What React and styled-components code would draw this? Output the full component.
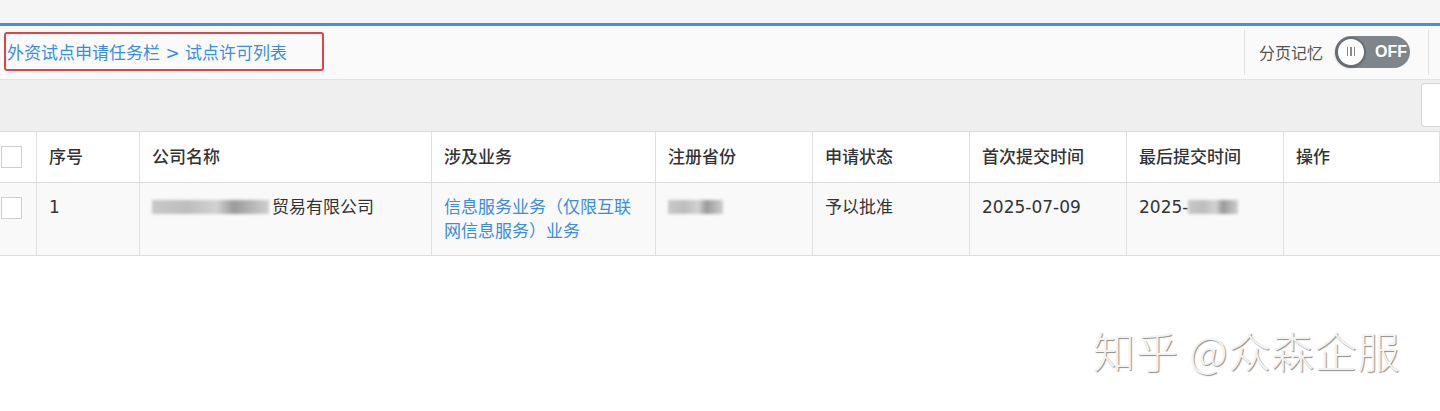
import React from "react";
import styled, { createGlobalStyle } from "styled-components";

const Global = createGlobalStyle`
  html, body { margin: 0; padding: 0; background: #fff; }
  body { font-family: "DejaVu Sans", "Noto Sans CJK SC", sans-serif; color: #333; }
  * { box-sizing: border-box; }
`;

const Page = styled.div`
  width: 1440px;
  height: 411px;
  position: relative;
  overflow: hidden;
  background: #fff;
`;

const TopBand = styled.div`
  height: 23px;
  background: #f5f5f5;
  border-bottom: 3px solid #4a8ee0;
  box-sizing: content-box;
`;

const HeaderBar = styled.div`
  height: 54px;
  display: flex;
  align-items: center;
  background: #fafafa;
  border-bottom: 1px solid #e2e2e2;
  padding-left: 4px;
`;

const Crumb = styled.div`
  border: 2px solid #e2434b;
  border-radius: 3px;
  height: 39px;
  width: 320px;
  display: flex;
  align-items: center;
  padding-left: 1px;
  font-size: 17px;
  color: #3b8de0;
  margin-top: -3px;
  white-space: pre;
`;

const Spacer = styled.div`
  flex: 1;
`;

const ToolGroup = styled.div`
  height: 44px;
  display: flex;
  align-items: center;
  gap: 12px;
  border-left: 1px solid #dedede;
  border-right: 1px solid #dedede;
  padding: 0 18px 0 14px;
  margin-right: 11px;
  margin-top: -2px;
`;

const ToolLabel = styled.span`
  font-size: 16px;
  font-family: "Noto Sans CJK SC", sans-serif;
  color: #555;
`;

const Switch = styled.div`
  width: 75px;
  height: 32px;
  border-radius: 16px;
  background: #7e868c;
  display: flex;
  align-items: center;
  padding-left: 1px;
  gap: 9px;
`;

const Knob = styled.div`
  width: 30px;
  height: 30px;
  border-radius: 50%;
  background: #fff;
  border: 2px solid #6a7075;
  box-shadow: -1px 1px 2px rgba(0,0,0,0.3);
  display: flex;
  align-items: center;
  justify-content: center;
  gap: 2px;
`;

const KnobLine = styled.span`
  width: 1.5px;
  height: 9px;
  background: #8a8a8a;
`;

const SwitchText = styled.span`
  color: #fff;
  font-size: 16px;
  font-weight: bold;
  font-family: "Liberation Sans", sans-serif;
`;

const GrayBand = styled.div`
  height: 52px;
  background: #efefef;
  display: flex;
  justify-content: flex-end;
  align-items: center;
  border-bottom: 1px solid #dcdcdc;
`;

const SearchBox = styled.div`
  width: 19px;
  height: 44px;
  background: #fff;
  border: 1px solid #d6d6d6;
  border-right: none;
  border-radius: 4px 0 0 4px;
  margin-top: -1px;
`;

const Table = styled.div`
  display: grid;
  grid-template-columns: 37px 103px 292px 224px 157px 157px 157px 157px 156px;
  border-bottom: 1px solid #dcdcdc;
`;

const Cell = styled.div`
  height: ${(p) => (p.$head ? "51px" : "72px")};
  border-right: 1px solid #e0e0e0;
  border-bottom: ${(p) => (p.$head ? "1px solid #dcdcdc" : "none")};
  background: ${(p) => (p.$head ? "#fff" : "#f9f9f9")};
  padding: ${(p) => (p.$head ? "0 12px" : "12px 12px 0")};
  display: flex;
  align-items: ${(p) => (p.$head ? "center" : "flex-start")};
  font-size: 17px;
  line-height: 24px;
  font-weight: ${(p) => (p.$head ? 500 : 400)};
  color: ${(p) => (p.$link ? "#3b8de0" : "#333")};
  &:last-child { border-right: none; }
`;

const CheckCell = styled(Cell)`
  padding: ${(p) => (p.$head ? "0 0 0 1px" : "14px 0 0 1px")};
`;

const Check = styled.div`
  width: 21px;
  height: 22px;
  border: 1px solid #cfcfcf;
  background: #fff;
`;

const Blur = styled.span`
  display: inline-block;
  flex: none;
  width: ${(p) => p.$w}px;
  height: 14px;
  margin-top: 5px;
  background: linear-gradient(90deg, #c8c8c8, #bdbdbd 30%, #d2d2d2 55%, #9a9a9a 70%, #b5b5b5 85%, #cfcfcf);
  filter: blur(1.5px);
  margin-right: 3px;
`;

const Watermark = styled.div`
  position: absolute;
  left: 1093px;
  top: 319px;
  font-size: 42px;
  letter-spacing: 1px;
  color: #f3f3f3;
  text-shadow: 1px 1px 1px #8d8d8d, -1px -1px 0 #fff;
  font-family: "Noto Sans CJK SC", sans-serif;
  font-weight: 300;
  white-space: nowrap;
`;

const heads = ["序号", "公司名称", "涉及业务", "注册省份", "申请状态", "首次提交时间", "最后提交时间", "操作"];

export default function App() {
  return (
    <Page>
      <Global />
      <TopBand />
      <HeaderBar>
        <Crumb>{"外资试点申请任务栏 > 试点许可列表"}</Crumb>
        <Spacer />
        <ToolGroup>
          <ToolLabel>分页记忆</ToolLabel>
          <Switch>
            <Knob>
              <KnobLine />
              <KnobLine />
              <KnobLine />
            </Knob>
            <SwitchText>OFF</SwitchText>
          </Switch>
        </ToolGroup>
      </HeaderBar>
      <GrayBand>
        <SearchBox />
      </GrayBand>
      <Table>
        <CheckCell $head>
          <Check />
        </CheckCell>
        {heads.map((h) => (
          <Cell $head key={h}>{h}</Cell>
        ))}
        <CheckCell>
          <Check />
        </CheckCell>
        <Cell>1</Cell>
        <Cell>
          <Blur $w={117} />贸易有限公司
        </Cell>
        <Cell $link>信息服务业务（仅限互联网信息服务）业务</Cell>
        <Cell>
          <Blur $w={55} />
        </Cell>
        <Cell>予以批准</Cell>
        <Cell>2025-07-09</Cell>
        <Cell>
          2025-<Blur $w={50} />
        </Cell>
        <Cell />
      </Table>
      <Watermark>知乎 @众森企服</Watermark>
    </Page>
  );
}
